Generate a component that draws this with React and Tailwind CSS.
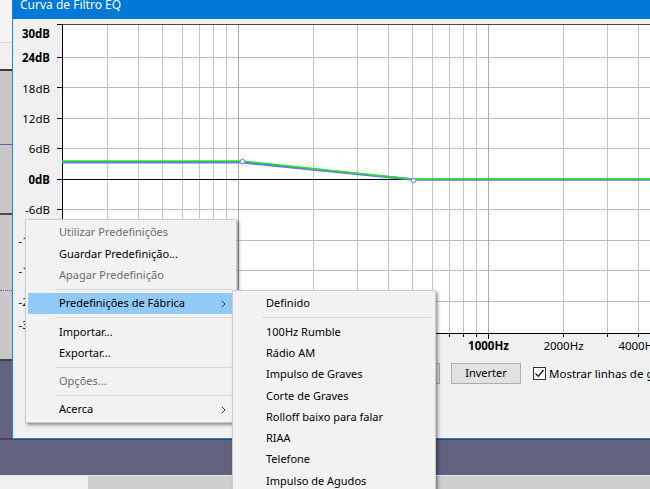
import React from "react";

const font = "font-['Noto_Sans',sans-serif]";

// frequency grid (log scale, 100Hz at x=238, one decade = 250px)
const freqs = [30, 40, 50, 60, 70, 80, 90, 100, 200, 300, 400, 500, 600, 700, 800, 900, 1000, 2000, 3000, 4000];
const fx = (f) => Math.floor(238 + 250 * Math.log10(f / 100)) + 0.5;
const dy = (db) => Math.floor(179 - (db * 30.5) / 6) + 0.5;

const dbLabels = [
  { t: "30dB", y: 33, bold: true },
  { t: "24dB", y: 57, bold: true },
  { t: "18dB", y: 88 },
  { t: "12dB", y: 118 },
  { t: "6dB", y: 148 },
  { t: "0dB", y: 179, bold: true },
  { t: "-6dB", y: 209 },
  { t: "-12dB", y: 240 },
  { t: "-18dB", y: 270 },
  { t: "-24dB", y: 301 },
  { t: "-30dB", y: 324 },
];

const hzLabels = [
  { t: "1000Hz", f: 1000, bold: true },
  { t: "2000Hz", f: 2000 },
  { t: "4000Hz", f: 4000 },
];

const Chevron = () => (
  <svg width="5" height="8" viewBox="0 0 5 8" className="shrink-0">
    <path d="M0.8 0.8 L4 4 L0.8 7.2" fill="none" stroke="#333" strokeWidth="1" />
  </svg>
);

const MenuItem = ({ label, disabled, active, arrow }) => (
  <div
    className={`flex items-center h-[21.3px] pl-[31px] pr-[6px] ${
      active ? "bg-[#91c9f7]" : ""
    } ${disabled ? "text-[#6d6d6d]" : "text-black"}`}
  >
    <span className="flex-1 whitespace-nowrap">{label}</span>
    {arrow && <Chevron />}
  </div>
);

const Sep = () => <div className="my-[3px] h-px ml-[27px] bg-[#d7d7d7]" />;

const Chart = () => (
  <svg width="637" height="336" viewBox="13 19 637 336" className="block shrink-0">
    <rect x="62" y="24" width="600" height="310" fill="#fff" />
    {[24, 18, 12, 6, -6, -12, -18, -24].map((db) => (
      <line key={db} x1="62" x2="650" y1={dy(db)} y2={dy(db)} stroke="#bcbcbc" />
    ))}
    {freqs.map((f) => (
      <line
        key={f}
        x1={fx(f)}
        x2={fx(f)}
        y1="25"
        y2="333"
        stroke={f === 100 || f === 1000 ? "#a8a8a8" : "#c4c4c4"}
      />
    ))}
    <line x1="62" x2="650" y1="24.5" y2="24.5" stroke="#4a4a4a" />
    <line x1="62" x2="650" y1={dy(0)} y2={dy(0)} stroke="#000" />
    <line x1="62.5" x2="62.5" y1="24" y2="334" stroke="#000" />
    <line x1="62" x2="650" y1="333.5" y2="333.5" stroke="#000" />
    {[30, 24, 18, 12, 6, 0, -6, -12, -18, -24].map((db) => (
      <line key={db} x1="57" x2="62" y1={db === 30 ? 24.5 : dy(db)} y2={db === 30 ? 24.5 : dy(db)} stroke="#000" />
    ))}
    {freqs.map((f) => (
      <line
        key={f}
        x1={fx(f)}
        x2={fx(f)}
        y1="333"
        y2={f === 100 || f === 1000 ? 339 : 337}
        stroke="#000"
      />
    ))}
    {dbLabels.map((l) => (
      <text
        key={l.t}
        x="50"
        y={l.y}
        textAnchor="end"
        dominantBaseline="central"
        fontFamily="Noto Sans, sans-serif"
        fontSize="11.5"
        fontWeight={l.bold ? 700 : 400}
        fill="#000"
      >
        {l.t}
      </text>
    ))}
    {hzLabels.map((l) => (
      <text
        key={l.t}
        x={fx(l.f)}
        y="345"
        textAnchor="middle"
        dominantBaseline="central"
        fontFamily="Noto Sans, sans-serif"
        fontSize="11.5"
        fontWeight={l.bold ? 700 : 400}
        fill="#000"
      >
        {l.t}
      </text>
    ))}
    {/* filter curve */}
    <polyline points="62,162.3 242,162.3 413,179.5 650,179.5" fill="none" stroke="#6f6ff2" strokeWidth="2.6" />
    <polyline points="62,161 242,161 413,179.2 650,179.2" fill="none" stroke="#1ee61e" strokeWidth="1.4" />
    <circle cx="242.5" cy="161.5" r="2.3" fill="#fff" stroke="#7a7af5" strokeWidth="1" />
    <circle cx="413.5" cy="180.5" r="2.3" fill="#fff" stroke="#7a7af5" strokeWidth="1" />
  </svg>
);

export default function App() {
  return (
    <div className={`relative w-[650px] h-[489px] overflow-hidden text-[11px] ${font}`}>
      {/* main window behind the dialog */}
      <div className="flex flex-col w-full h-full">
        <div className="h-[43px] bg-[#f3f3f3] border-b border-[#d4d4d4]" />
        <div className="h-[26px] bg-[#f0f0f0]" />
        <div className="h-[2px] bg-[#3c3c3c]" />
        <div className="h-[142px] bg-[#c6c6c6] flex flex-col">
          <div className="h-[73px]" />
          <div className="h-px bg-[#5a5ac8]" />
        </div>
        <div className="h-[2px] bg-[#4a4a4a]" />
        <div className="h-[144px] bg-[#c8c8c8] flex flex-col">
          <div className="h-[75px]" />
          <div className="h-px border-t border-dotted border-[#5a5ac8]" />
        </div>
        <div className="h-[2px] bg-[#404048]" />
        <div className="h-[114px] bg-[#62627f] flex flex-col">
          <div className="h-[77px]" />
          <div className="h-[2px] bg-[#45455a]" />
        </div>
        <div className="flex flex-1 border-t border-[#eaeaea]">
          <div className="w-[88px] bg-[#f0f0f0]" />
          <div className="flex-1 bg-[#cfcfcf]" />
        </div>
      </div>

      {/* dialog window */}
      <div className="absolute left-[12px] top-0 w-[638px] h-[439px] flex flex-col bg-[#f0f0f0] border-l border-b border-[#1a84d8]">
        <div className="h-[19px] shrink-0 bg-[#0078d7] pl-[7px] text-white text-[12px] leading-[12px]">
          <div className="-mt-[1px] whitespace-nowrap">Curva de Filtro EQ</div>
        </div>
        <Chart />
        <div className="flex items-center mt-[8px] pl-[357px] gap-[11px] whitespace-nowrap">
          <button className="shrink-0 w-[70px] h-[21px] bg-[#e1e1e1] border border-[#adadad] text-black">
            Nivelar
          </button>
          <button className="shrink-0 w-[70px] h-[21px] bg-[#e1e1e1] border border-[#adadad] text-black">
            Inverter
          </button>
          <div className="shrink-0 flex items-center gap-[3px] ml-[1px]">
            <div className="w-[13px] h-[13px] border border-[#333] bg-white flex items-center justify-center">
              <svg width="11" height="11" viewBox="0 0 11 11">
                <path d="M1.5 5.5 L4.3 8.3 L9.5 2" fill="none" stroke="#000" strokeWidth="1.2" />
              </svg>
            </div>
            <span className="text-black text-[11.5px]">Mostrar linhas de grade</span>
          </div>
        </div>
      </div>

      {/* context menu */}
      <div className="absolute left-[25px] top-[219px] w-[212px] bg-[#f2f2f2] border border-[#cccccc] py-[2px] pl-[2px] pr-[4px] shadow-[2px_2px_3px_rgba(0,0,0,0.4)]">
        <MenuItem label="Utilizar Predefinições" disabled />
        <MenuItem label="Guardar Predefinição..." />
        <MenuItem label="Apagar Predefinição" disabled />
        <Sep />
        <MenuItem label="Predefinições de Fábrica" active arrow />
        <Sep />
        <MenuItem label="Importar..." />
        <MenuItem label="Exportar..." />
        <Sep />
        <MenuItem label="Opções..." disabled />
        <Sep />
        <MenuItem label="Acerca" arrow />
      </div>

      {/* factory presets submenu */}
      <div className="absolute left-[232px] top-[290px] w-[204px] h-[220px] bg-[#f2f2f2] border border-[#cccccc] py-[2px] pl-[2px] pr-[4px] shadow-[2px_2px_3px_rgba(0,0,0,0.4)]">
        <MenuItem label="Definido" />
        <Sep />
        <MenuItem label="100Hz Rumble" />
        <MenuItem label="Rádio AM" />
        <MenuItem label="Impulso de Graves" />
        <MenuItem label="Corte de Graves" />
        <MenuItem label="Rolloff baixo para falar" />
        <MenuItem label="RIAA" />
        <MenuItem label="Telefone" />
        <MenuItem label="Impulso de Agudos" />
      </div>
    </div>
  );
}
